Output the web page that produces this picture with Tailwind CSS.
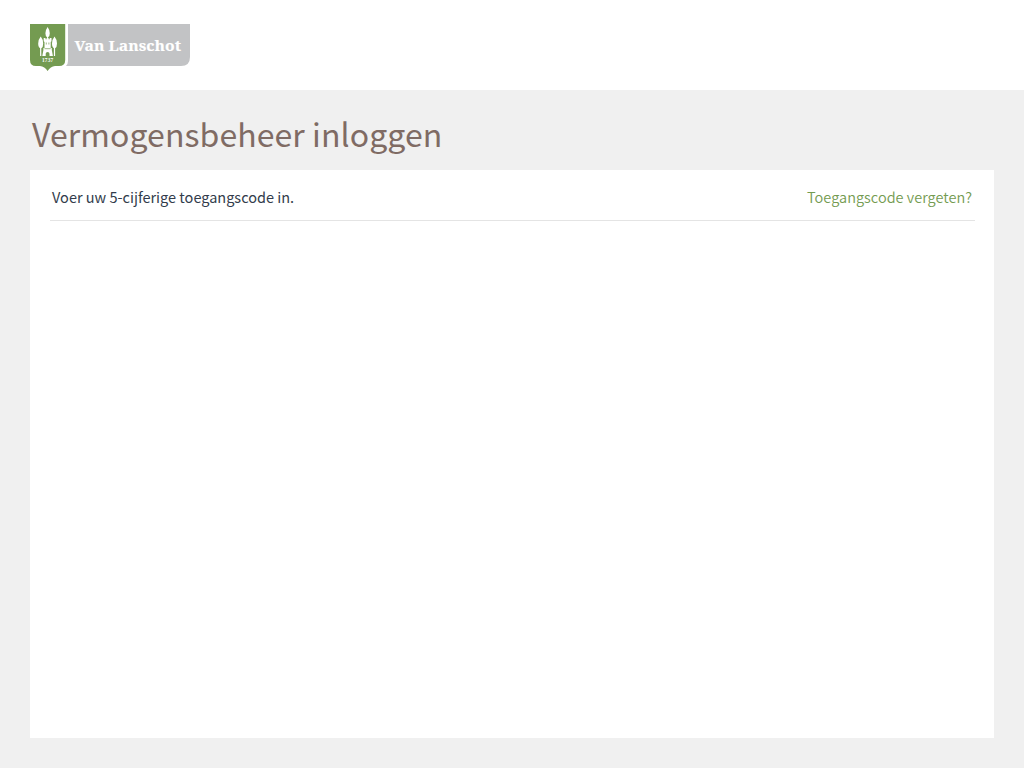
<!DOCTYPE html>
<html lang="nl">
<head>
<meta charset="utf-8">
<title>Vermogensbeheer inloggen</title>
<script src="https://cdn.jsdelivr.net/npm/@tailwindcss/browser@4"></script>
</head>
<body class="flex h-screen flex-col overflow-hidden bg-[#f0f0f0] font-['Noto_Sans_CJK_SC',sans-serif]">
<header class="h-[90px] shrink-0 bg-white pl-[30px] pt-6">
  <svg class="block" width="160" height="48" viewBox="0 0 160 48" role="img" aria-label="Van Lanschot">
    <path d="M38 0H160V33Q160 42 151 42H36Q38 40 38 37Z" fill="#c2c3c5"/>
    <path d="M0 0H35.2V36Q35.2 42 29 42H25Q20.500 42.500 17.600 47Q14.700 42.500 10 42H6Q0 42 0 36Z" fill="#749b51"/>
    <g fill="#fff">
      <path d="M17.600 3Q19.800 6 19.800 9.300Q19.800 12.500 18.100 13.200V15H17.100V13.200Q15.400 12.500 15.400 9.300Q15.400 6 17.600 3Z"/>
      <path d="M10.700 12.500Q13.200 15.500 13.200 19.500Q13.200 23.300 11.300 24.300V32H10.100V24.300Q8.200 23.300 8.200 19.500Q8.200 15.500 10.700 12.500Z"/>
      <path d="M24.500 12.500Q27 15.500 27 19.500Q27 23.300 25.100 24.300V32H23.900V24.300Q22 23.300 22 19.500Q22 15.500 24.500 12.500Z"/>
      <path d="M13.700 14H15.500V15.200H16.600V14H18.600V15.200H19.700V14H21.500V17.200L20.700 18V24H21.800V26L22.900 32H19.500V29.800Q19.500 28 17.600 28Q15.700 28 15.700 29.800V32H12.300L13.400 26V24H14.500V18L13.700 17.200Z"/>
    </g>
    <path d="M16.300 18.500V20.500M18.900 18.500V20.500M14.500 24.700H20.700" stroke="#749b51" stroke-width=".7"/>
    <text x="12" y="38.300" font-family="Liberation Serif, serif" font-size="5.400" font-weight="700" fill="#fff" textLength="11.300">1737</text>
    <text x="44.500" y="26.700" font-family="Noto Serif, DejaVu Serif, serif" font-size="15" font-weight="700" fill="#fff" stroke="#fff" stroke-width=".15" textLength="106.500" lengthAdjust="spacingAndGlyphs">Van Lanschot</text>
  </svg>
</header>
<main class="flex min-h-0 flex-1 flex-col px-[30px] pb-[30px]">
  <h1 class="flex h-20 shrink-0 items-center pl-0.5 pt-1.5 text-[32px] leading-none tracking-[0.08px] text-[#7f6b64]"><span class="whitespace-nowrap">Vermogensbeheer inloggen</span></h1>
  <section class="flex-1 bg-white pl-5 pr-[19px]">
    <div class="flex h-[51px] items-center justify-between border-b border-[#e4e4e4] pl-0.5 pr-[3px] pt-[5px] text-[14.5px] leading-none">
      <p class="text-[#323c4b]">Voer uw 5-cijferige toegangscode in.</p>
      <a href="#" class="font-[350] tracking-[0.03px] text-[#749b51]">Toegangscode vergeten?</a>
    </div>
  </section>
</main>
</body>
</html>
